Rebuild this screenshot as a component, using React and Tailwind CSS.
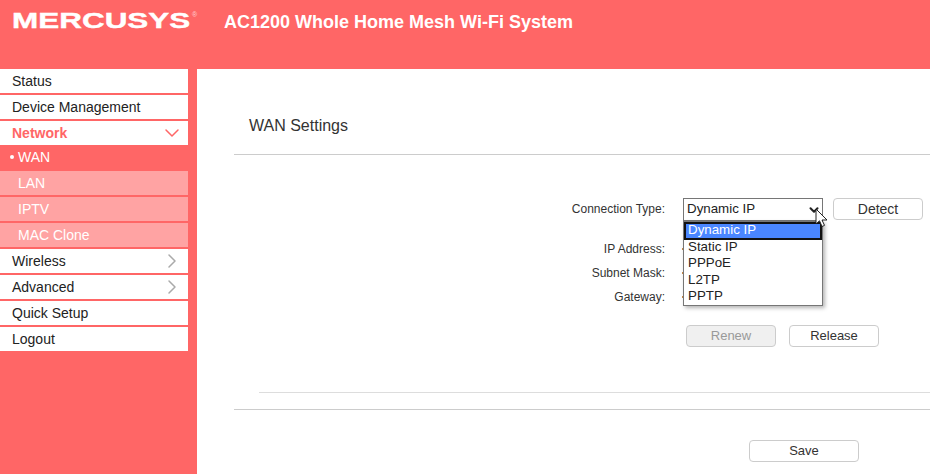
import React from "react";
import { ChevronDown, ChevronRight } from "lucide-react";

const topItems = ["Status", "Device Management"];
const subItems = ["LAN", "IPTV", "MAC Clone"];
const options = ["Static IP", "PPPoE", "L2TP", "PPTP"];

const SideRow = ({ label, icon }) => (
  <div className="h-6 mb-[2px] bg-white flex items-center justify-between pl-3 pr-1 text-[14px] text-[#222]">
    <span>{label}</span>
    {icon}
  </div>
);

const Btn = ({ label, className = "", disabled }) => (
  <button
    disabled={disabled}
    className={`h-[22px] border border-[#ccc] rounded-[4px] text-[13px] ${disabled ? "bg-[#f0f0f0] text-[#999]" : "bg-white text-[#333]"} ${className}`}
  >
    {label}
  </button>
);

// values of these fields are hidden under the open select, only a sliver shows
const Field = ({ label, mt }) => (
  <div className={`flex items-center h-4 ${mt}`}>
    <span className="w-[431px] text-right text-[12px] text-[#333]">{label}</span>
    <span className="ml-[17px] w-[2px] h-[2px] bg-[#c98a4a]" />
  </div>
);

export default function App() {
  return (
    <div className="h-[474px] w-[930px] overflow-hidden bg-[#ff6666] font-['Liberation_Sans',Arial,sans-serif] flex flex-col">
      <header className="h-[69px] shrink-0 flex items-start">
        <div className="w-[224px] pl-[12px] pt-[7px] flex items-start">
          <span className="inline-block w-[122px] origin-left scale-x-[1.43] text-[22px] leading-[28px] font-bold text-white [-webkit-text-stroke:0.4px_white]">
            MERCUSYS
          </span>
          <span className="ml-[58px] mt-[4px] text-[7px] leading-[8px] text-white/70">®</span>
        </div>
        <h1 className="pt-[12px] text-[18px] leading-[21px] font-bold text-white">
          AC1200 Whole Home Mesh Wi-Fi System
        </h1>
      </header>

      <div className="flex flex-1">
        <nav className="w-[197px] shrink-0 pr-[9px]">
          {topItems.map((item) => (
            <SideRow key={item} label={item} />
          ))}
          <div className="h-6 bg-white flex items-center justify-between pl-3 pr-1 text-[14px] font-bold text-[#ff6666]">
            <span>Network</span>
            <ChevronDown size={24} strokeWidth={1.5} />
          </div>
          <div className="h-6 mb-[2px] flex items-center pl-[10px] text-[14px] text-white">
            <span className="w-1 h-1 rounded-full bg-white mr-[4px]" />
            <span>WAN</span>
          </div>
          {subItems.map((item) => (
            <div key={item} className="h-6 mb-[2px] bg-[#ffa3a3] flex items-center pl-[18px] text-[14px] text-white">
              {item}
            </div>
          ))}
          <SideRow label="Wireless" icon={<ChevronRight size={24} strokeWidth={1.5} className="text-[#aaa]" />} />
          <SideRow label="Advanced" icon={<ChevronRight size={24} strokeWidth={1.5} className="text-[#aaa]" />} />
          <SideRow label="Quick Setup" />
          <SideRow label="Logout" />
        </nav>

        <main className="flex-1 bg-white pl-[37px] relative">
          <h2 className="pl-[15px] pt-[48px] text-[16px] leading-[18px] text-[#333]">WAN Settings</h2>
          <div className="mt-[19px] h-px bg-[#ccc]" />

          <div className="mt-[43px] flex items-center h-[22px]">
            <span className="w-[431px] text-right text-[12px] text-[#333]">Connection Type:</span>
            <div className="relative ml-[18px] w-[140px] h-[23px] border border-[#767676] bg-white flex items-center pl-[3px] text-[13.33px] text-[#222]">
              Dynamic IP
              <ChevronDown size={14} strokeWidth={3.5} className="absolute right-[1px] top-[4px] text-[#222]" />
            </div>
            <Btn label="Detect" className="ml-[10px] w-[90px] text-[14px] pb-[2px]" />
          </div>

          <Field label="IP Address:" mt="mt-[21px]" />
          <Field label="Subnet Mask:" mt="mt-[8px]" />
          <Field label="Gateway:" mt="mt-[8px]" />

          <div className="mt-[20px] pl-[452px] flex">
            <Btn label="Renew" disabled className="w-[90px]" />
            <Btn label="Release" className="ml-[13px] w-[90px]" />
          </div>

          <div className="mt-[45px] ml-[25px] h-px bg-[#ddd]" />
          <div className="mt-[16px] h-px bg-[#ccc]" />

          <div className="mt-[28px] pl-[515px]">
            <Btn label="Save" className="w-[110px]" />
          </div>

          {/* open select list sits over the fields */}
          <div className="absolute left-[486px] top-[152px] w-[140px] h-[85px] border border-[#767676] bg-white shadow-[2px_2px_4px_rgba(0,0,0,0.3)] text-[13.33px] leading-[16.5px] text-[#222]">
            <div className="h-[18px] bg-[#4a86ff] border-2 border-[#111] text-white pl-[2px] leading-[11px]">Dynamic IP</div>
            <div className="-mt-[1.5px]">
              {options.map((opt) => (
                <div key={opt} className="pl-[4px]">
                  {opt}
                </div>
              ))}
            </div>
          </div>

          {/* mouse pointer */}
          <svg className="absolute left-[618px] top-[139px]" width="15" height="21" viewBox="0 0 15 21">
            <path d="M1 1 L1 16 L4.5 12.8 L7 18.5 L9.5 17.4 L7 12 L12 12 Z" fill="#fff" stroke="#222" strokeWidth="1" />
          </svg>
        </main>
      </div>
    </div>
  );
}
